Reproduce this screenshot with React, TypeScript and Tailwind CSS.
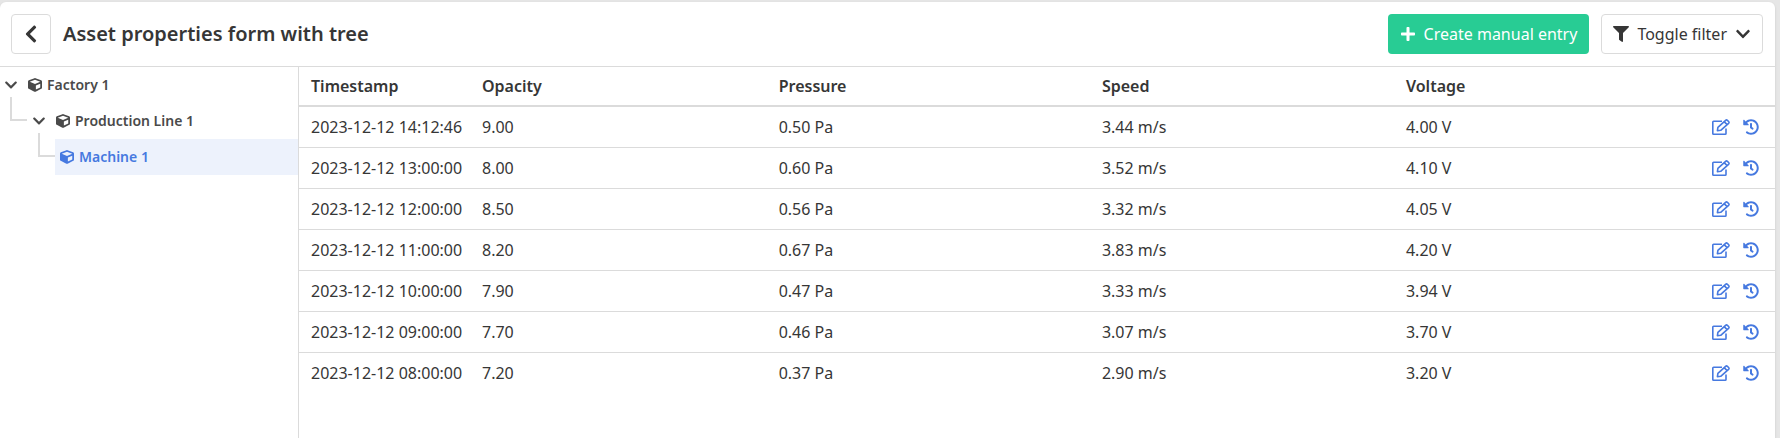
import { useState } from "react";
import { FaChevronDown, FaChevronLeft, FaCube, FaFilter, FaHistory, FaPlus } from "react-icons/fa";

const columns = ["Opacity", "Pressure", "Speed", "Voltage"];

const entries = [
  { timestamp: "2023-12-12 14:12:46", values: ["9.00", "0.50 Pa", "3.44 m/s", "4.00 V"] },
  { timestamp: "2023-12-12 13:00:00", values: ["8.00", "0.60 Pa", "3.52 m/s", "4.10 V"] },
  { timestamp: "2023-12-12 12:00:00", values: ["8.50", "0.56 Pa", "3.32 m/s", "4.05 V"] },
  { timestamp: "2023-12-12 11:00:00", values: ["8.20", "0.67 Pa", "3.83 m/s", "4.20 V"] },
  { timestamp: "2023-12-12 10:00:00", values: ["7.90", "0.47 Pa", "3.33 m/s", "3.94 V"] },
  { timestamp: "2023-12-12 09:00:00", values: ["7.70", "0.46 Pa", "3.07 m/s", "3.70 V"] },
  { timestamp: "2023-12-12 08:00:00", values: ["7.20", "0.37 Pa", "2.90 m/s", "3.20 V"] },
];

function EditIcon() {
  return (
    <svg viewBox="0 0 18 16" className="w-[18px] h-4" fill="none" stroke="currentColor" strokeWidth={1.6} strokeLinejoin="round">
      <path d="M10 2.2H1.6a.8.8 0 0 0-.8.8v11.4a.8.8 0 0 0 .8.8h11.6a.8.8 0 0 0 .8-.8V9.4" />
      <path d="M5.4 11.6l.5-3.2L13.6 1.3a1.3 1.3 0 0 1 1.8 0l1.2 1.2a1.3 1.3 0 0 1 0 1.8l-7.9 7zM12.2 2.6l2.9 3" />
    </svg>
  );
}

export default function App() {
  const [selected, setSelected] = useState("Machine 1");

  return (
    <div className="bg-[#e6e6e6] pt-[2px] pr-[5px] min-h-screen flex flex-col font-['Noto_Sans',sans-serif] text-[#363636]">
      <div className="bg-white rounded-t-md shadow flex-1 flex flex-col">
        {/* Header */}
        <header className="flex items-center gap-3 pl-[11px] pr-3 py-3 border-b border-[#dbdbdb]">
          <button aria-label="Back" className="w-10 h-10 flex items-center justify-center border border-[#dbdbdb] rounded">
            <FaChevronLeft className="w-5 h-5" />
          </button>
          <h1 className="flex-1 text-[20px] leading-6 font-semibold">Asset properties form with tree</h1>
          <button className="h-10 px-3 flex items-center gap-2 rounded bg-[#28cc94] text-white">
            <FaPlus className="w-4 h-4" />
            Create manual entry
          </button>
          <button className="h-10 px-[11px] flex items-center gap-2 border border-[#dbdbdb] rounded">
            <FaFilter className="w-4 h-4" />
            Toggle filter
            <FaChevronDown className="w-4 h-4" />
          </button>
        </header>

        <div className="flex flex-1">
          {/* Asset tree */}
          <nav className="w-[299px] shrink-0 border-r border-[#dbdbdb] text-sm font-semibold text-[#4a4a4a]">
            <div className="h-9 flex items-center pl-1">
              <FaChevronDown className="w-[14px] h-[14px] mr-[10px]" />
              <button onClick={() => setSelected("Factory 1")} className="flex items-center gap-[5px]">
                <FaCube className="w-[14px] h-[14px]" />
                Factory 1
              </button>
            </div>
            <div className="h-9 flex items-center pl-[10px]">
              <span className="w-[17px] h-6 mb-6 mr-[5px] border-l-2 border-b-2 border-[#dbdbdb]" />
              <FaChevronDown className="w-[14px] h-[14px] mr-[10px]" />
              <button onClick={() => setSelected("Production Line 1")} className="flex items-center gap-[5px]">
                <FaCube className="w-[14px] h-[14px]" />
                Production Line 1
              </button>
            </div>
            <div className="h-9 flex items-center pl-[38px]">
              <span className="w-[17px] h-6 mb-6 border-l-2 border-b-2 border-[#dbdbdb]" />
              <button
                onClick={() => setSelected("Machine 1")}
                aria-current={selected === "Machine 1"}
                className="h-9 flex-1 flex items-center gap-[5px] px-[5px] bg-[#edf2fc] text-[#4679e0]"
              >
                <FaCube className="w-[14px] h-[14px]" />
                Machine 1
              </button>
            </div>
          </nav>

          {/* Entries */}
          <div className="flex-1">
            <table className="w-full table-fixed text-left leading-6">
              <colgroup>
                <col className="w-[171px]" />
                <col className="w-[20.1%]" />
                <col className="w-[21.9%]" />
                <col className="w-[20.6%]" />
                <col />
                <col className="w-24" />
              </colgroup>
              <thead>
                <tr className="h-[39px] border-b-2 border-[#dbdbdb]">
                  <th className="px-3 font-semibold">Timestamp</th>
                  {columns.map((column) => (
                    <th key={column} className="px-3 font-semibold">{column}</th>
                  ))}
                  <th />
                </tr>
              </thead>
              <tbody>
                {entries.map((entry) => (
                  <tr key={entry.timestamp} className="h-[41px] border-b border-[#dbdbdb] last:border-b-0">
                    <td className="pl-3 whitespace-nowrap">{entry.timestamp}</td>
                    {entry.values.map((value, index) => (
                      <td key={index} className="px-3">{value}</td>
                    ))}
                    <td className="px-4">
                      <div className="flex justify-end gap-[13px] text-[#4679e0]">
                        <button aria-label="Edit"><EditIcon /></button>
                        <button aria-label="History"><FaHistory className="w-4 h-4" /></button>
                      </div>
                    </td>
                  </tr>
                ))}
              </tbody>
            </table>
          </div>
        </div>
      </div>
    </div>
  );
}
